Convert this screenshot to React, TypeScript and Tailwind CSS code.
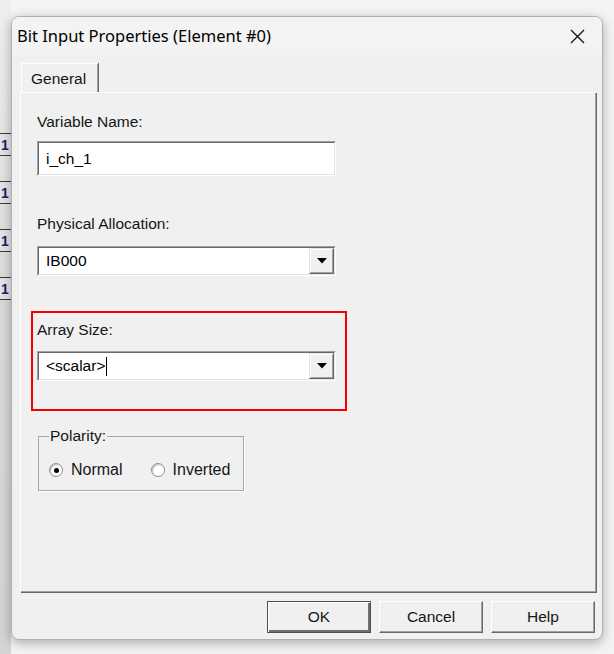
import React from 'react';

const ui = '"Liberation Sans", Arial, sans-serif';

function Sunken({ className, children }: { className: string; children?: React.ReactNode }) {
  return (
    <div className={`border border-t-[#a0a0a0] border-l-[#a0a0a0] border-b-white border-r-white ${className}`}>
      <div className="flex h-full w-full border border-t-[#696969] border-l-[#696969] border-b-[#e3e3e3] border-r-[#e3e3e3] bg-white">
        {children}
      </div>
    </div>
  );
}

function DropButton() {
  return (
    <div className="flex h-full w-[25px] items-center justify-center border border-t-[#e3e3e3] border-l-[#e3e3e3] border-b-[#696969] border-r-[#696969]">
      <div className="flex h-full w-full items-center justify-center border border-t-white border-l-white border-b-[#a0a0a0] border-r-[#a0a0a0] bg-[#f0f0f0]">
        <svg width="10" height="6" viewBox="0 0 10 6">
          <path d="M0 0 H10 L5 5.5 Z" fill="#000" />
        </svg>
      </div>
    </div>
  );
}

function Combo({ value, caret }: { value: string; caret?: boolean }) {
  return (
    <Sunken className="h-[30px] w-[299px]">
      <div className="flex flex-1 items-center pl-[7px] text-[15.5px] text-black">
        <span>{value}</span>
        {caret && <span className="ml-[1px] h-[19px] w-[1px] bg-black" />}
      </div>
      <DropButton />
    </Sunken>
  );
}

function Radio({ checked, label, className }: { checked?: boolean; label: string; className?: string }) {
  return (
    <div className={`flex items-center ${className ?? ''}`}>
      <div className="flex h-[14px] w-[14px] items-center justify-center rounded-full border border-[#8e8e8e] bg-white shadow-[inset_1px_1px_1px_#bdbdbd]">
        {checked && <div className="h-[5px] w-[5px] rounded-full bg-black" />}
      </div>
      <span className="ml-[8px] text-[16px]">{label}</span>
    </div>
  );
}

function Button({ label, isDefault }: { label: string; isDefault?: boolean }) {
  return (
    <div
      className={`flex h-[32px] w-[104px] items-center justify-center border ${
        isDefault
          ? 'border-[#4e4e4e] shadow-[inset_1px_1px_0_#fff,inset_-2px_-2px_0_#6e6e6e]'
          : 'border-t-white border-l-white border-b-[#696969] border-r-[#696969] shadow-[inset_-1px_-1px_0_#a0a0a0]'
      } bg-[#f0f0f0] text-[15.5px]`}
    >
      {label}
    </div>
  );
}

export default function App() {
  return (
    <div
      className="flex h-[654px] w-[614px] overflow-hidden bg-[#f4f4f4] text-[#161616]"
      style={{ fontFamily: ui }}
    >
      {/* strip of the app behind the dialog */}
      <div className="flex w-[11px] flex-col bg-gradient-to-b from-[#efefef] via-[#dadada] to-[#d4d4d4] pt-[133px]">
        {['a', 'b', 'c', 'd'].map((k) => (
          <div
            key={k}
            className="mb-[25px] flex h-[23px] items-center border-y border-[#3c3c3c] bg-[#e4e4e4] pl-[1px] text-[14px] font-bold leading-none text-[#1c1c6a]"
          >
            1
          </div>
        ))}
      </div>

      <div className="mt-[16px] flex h-[624px] w-[592px] flex-col overflow-hidden rounded-[8px] border border-[#b1b1b1] bg-[#f0f0f0] shadow-[0_3px_12px_rgba(0,0,0,0.3)]">
        {/* title bar */}
        <div className="flex h-[38px] items-center justify-between bg-[#f3f3f3] pl-[5px] pr-[17px]">
          <span className="text-[16.5px] text-black" style={{ fontFamily: '"Noto Sans", "Open Sans", sans-serif' }}>
            Bit Input Properties (Element #0)
          </span>
          <svg width="15" height="15" viewBox="0 0 15 15">
            <path d="M1 1 L14 14 M14 1 L1 14" stroke="#111" strokeWidth="1.3" />
          </svg>
        </div>

        {/* client */}
        <div className="flex flex-1 flex-col pl-[8px] pr-[6px] pt-[8px]">
          <div className="flex">
            <div className="ml-[1px] flex h-[29px] w-[77px] items-center border-l border-t border-white pl-[9px] pt-[2px] shadow-[inset_-1px_0_0_#a0a0a0,1px_0_0_#696969] text-[15.5px]">
              General
            </div>
          </div>

          <div className="flex h-[500px] w-[576px] flex-col border-l border-t border-white pl-[16px] pt-[19px] shadow-[inset_-1px_-1px_0_#a0a0a0,1px_1px_0_#696969]">
            <div className="h-[20px] text-[15.5px] leading-[20px]">Variable Name:</div>
            <Sunken className="mt-[9px] h-[35px] w-[299px]">
              <div className="flex flex-1 items-center pl-[7px] text-[15.5px] text-black">i_ch_1</div>
            </Sunken>

            <div className="mt-[38px] h-[20px] text-[15.5px] leading-[20px]">Physical Allocation:</div>
            <div className="mt-[12px]">
              <Combo value="IB000" />
            </div>

            <div className="ml-[-6px] mt-[35px] w-[316px] border-2 border-[#f00000] pb-[28px] pl-[4px] pt-[7px]">
              <div className="h-[20px] text-[15.5px] leading-[20px]">Array Size:</div>
              <div className="mt-[11px]">
                <Combo value="<scalar>" caret />
              </div>
            </div>

            <fieldset className="ml-[1px] mt-[15px] h-[65px] w-[206px] border border-[#a8a8a8] px-[10px] shadow-[1px_1px_0_#fff]">
              <legend className="px-[1px] text-[15.5px] leading-[20px]">Polarity:</legend>
              <div className="mt-[12px] flex">
                <Radio checked label="Normal" />
                <Radio label="Inverted" className="ml-[28px]" />
              </div>
            </fieldset>
          </div>

          <div className="mt-[9px] flex justify-end gap-[8px] pr-[1px]">
            <Button label="OK" isDefault />
            <Button label="Cancel" />
            <Button label="Help" />
          </div>
        </div>
      </div>
    </div>
  );
}
